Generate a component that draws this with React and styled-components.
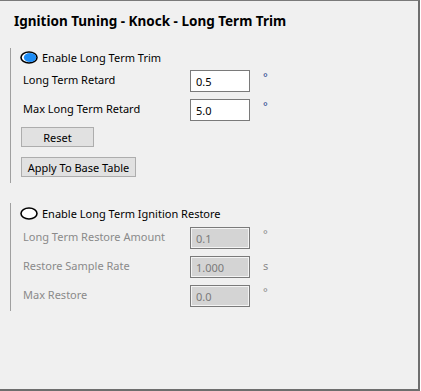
import React from 'react';
import styled, { createGlobalStyle } from 'styled-components';

const GlobalStyle = createGlobalStyle`
  html, body {
    margin: 0;
    padding: 0;
    background: #ffffff;
  }
  body {
    font-family: "Noto Sans", "Open Sans", sans-serif;
  }
`;

const Frame = styled.div`
  box-sizing: border-box;
  width: 420px;
  height: 391px;
  background: #f0f0f0;
  border-top: 1px solid #7a7a7a;
  border-right: 2px solid #6e6e6e;
  border-bottom: 2px solid #6e6e6e;
  display: flex;
  flex-direction: column;
`;

const Title = styled.h1`
  margin: 10px 0 0 14px;
  font-size: 13.5px;
  line-height: 20px;
  font-weight: 700;
  color: #000;
`;

const Group = styled.div`
  margin: ${p => p.$top}px 0 0 10px;
  padding-bottom: ${p => p.$bottom}px;
  border-left: 1px solid #a0a0a0;
  display: flex;
  flex-direction: column;
`;

const RadioRow = styled.label`
  display: flex;
  align-items: center;
  height: 18px;
  margin-top: ${p => p.$top || 0}px;
  padding-left: 9px;
  gap: 4px;
  font-size: 11px;
  color: #000;
`;

const Row = styled.div`
  display: flex;
  align-items: center;
  height: 22px;
  margin-top: ${p => p.$top}px;
  padding-left: 12px;
  font-size: 11px;
`;

const Label = styled.span`
  width: 167px;
  margin-top: -3px;
  color: ${p => (p.$disabled ? '#8a8a8a' : '#000')};
`;

const Field = styled.div`
  box-sizing: border-box;
  width: 60px;
  height: 22px;
  padding: 3px 5px 0;
  border: 1px solid #7a7a7a;
  background: ${p => (p.$disabled ? '#d4d4d4' : '#ffffff')};
  box-shadow: ${p => (p.$disabled ? 'inset 0 0 0 1px #f4f4f4' : 'none')};
  color: ${p => (p.$disabled ? '#7a7a7a' : '#000')};
  font-size: 11px;
  line-height: 16px;
`;

const Unit = styled.span`
  margin-left: 13px;
  align-self: ${p => (p.$top ? 'flex-start' : 'center')};
  margin-top: ${p => (p.$top ? '-1px' : '-3px')};
  color: ${p => (p.$disabled ? '#8a8a8a' : '#1c3f8c')};
  font-size: 11px;
`;

const Button = styled.button`
  box-sizing: border-box;
  align-self: flex-start;
  width: ${p => p.$width}px;
  height: 20px;
  margin: ${p => p.$top}px 0 0 10px;
  padding: 0;
  border: 1px solid #adadad;
  background: #e1e1e1;
  font-family: inherit;
  font-size: 11px;
  color: #000;
`;

const RadioIcon = ({ checked }) => (
  <svg width="18" height="13" viewBox="0 0 18 13">
    <ellipse cx="9" cy="6.5" rx="8" ry="5.5" fill="#ffffff" stroke="#000" strokeWidth="1.6" />
    {checked && <ellipse cx="10" cy="6.5" rx="6.2" ry="4.6" fill="#1c8cf5" />}
  </svg>
);

const Input = ({ label, value, unit, disabled, top }) => (
  <Row $top={top}>
    <Label $disabled={disabled}>{label}</Label>
    <Field $disabled={disabled}>{value}</Field>
    <Unit $disabled={disabled} $top={unit === '°'}>{unit}</Unit>
  </Row>
);

export default function App() {
  return (
    <>
      <GlobalStyle />
      <Frame>
        <Title>Ignition Tuning - Knock - Long Term Trim</Title>

        <Group $top={17} $bottom={6}>
          <RadioRow>
            <RadioIcon checked />
            Enable Long Term Trim
          </RadioRow>
          <Input top={4} label="Long Term Retard" value="0.5" unit="°" />
          <Input top={7} label="Max Long Term Retard" value="5.0" unit="°" />
          <Button $top={6} $width={73}>Reset</Button>
          <Button $top={10} $width={115}>Apply To Base Table</Button>
        </Group>

        <Group $top={20} $bottom={4}>
          <RadioRow $top={1}>
            <RadioIcon />
            Enable Long Term Ignition Restore
          </RadioRow>
          <Input disabled top={5} label="Long Term Restore Amount" value="0.1" unit="°" />
          <Input disabled top={7} label="Restore Sample Rate" value="1.000" unit="s" />
          <Input disabled top={7} label="Max Restore" value="0.0" unit="°" />
        </Group>
      </Frame>
    </>
  );
}
